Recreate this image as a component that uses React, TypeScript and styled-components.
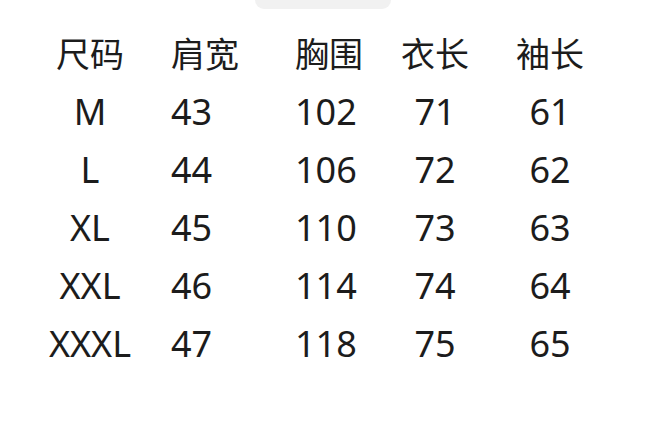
import React from 'react'
import styled, { createGlobalStyle } from 'styled-components'

const GlobalStyle = createGlobalStyle`
  html, body {
    margin: 0;
    padding: 0;
    background: #ffffff;
  }
  body {
    font-family: 'Noto Sans', 'Noto Sans CJK SC', sans-serif;
    color: #1c1c1c;
  }
`

type Align = 'left' | 'center'

type Column = {
  align: Align
  pad: number
}

// column tracks: 100 / 130 / 120 / 90 / 140, starting at 40px
const COLUMNS: Column[] = [
  { align: 'center', pad: 0 },
  { align: 'left', pad: 31 },
  { align: 'left', pad: 25 },
  { align: 'center', pad: 0 },
  { align: 'center', pad: 0 },
]

const HEADERS = ['尺码', '肩宽', '胸围', '衣长', '袖长']

const ROWS = [
  ['M', '43', '102', '71', '61'],
  ['L', '44', '106', '72', '62'],
  ['XL', '45', '110', '73', '63'],
  ['XXL', '46', '114', '74', '64'],
  ['XXXL', '47', '118', '75', '65'],
]

const Page = styled.div`
  width: 646px;
  height: 432px;
  display: flex;
  flex-direction: column;
  align-items: center;
  overflow: hidden;
`

const Handle = styled.div`
  width: 136px;
  height: 9px;
  flex-shrink: 0;
  background: #f1f1f1;
  border-radius: 0 0 13px 13px;
`

const Table = styled.div`
  align-self: stretch;
  display: grid;
  grid-template-columns: 100px 130px 120px 90px 140px;
  grid-auto-rows: 58px;
  padding: 16px 0 0 40px;
`

const Cell = styled.div<{ $align: Align; $pad: number }>`
  display: flex;
  align-items: center;
  justify-content: ${(p) => (p.$align === 'center' ? 'center' : 'flex-start')};
  padding-left: ${(p) => p.$pad}px;
  white-space: nowrap;
  font-size: 36px;
  line-height: 1;
  color: #1c1c1c;
`

const HeadCell = styled(Cell)`
  font-family: 'Noto Sans CJK SC', sans-serif;
  font-size: 34px;
  padding-bottom: 2px;
`

export default function App() {
  return (
    <>
      <GlobalStyle />
      <Page>
        <Handle />
        <Table>
          {HEADERS.map((h, i) => (
            <HeadCell key={h} $align={COLUMNS[i].align} $pad={COLUMNS[i].pad}>
              {h}
            </HeadCell>
          ))}
          {ROWS.map((row) =>
            row.map((v, i) => (
              <Cell key={row[0] + i} $align={COLUMNS[i].align} $pad={COLUMNS[i].pad}>
                {v}
              </Cell>
            ))
          )}
        </Table>
      </Page>
    </>
  )
}
